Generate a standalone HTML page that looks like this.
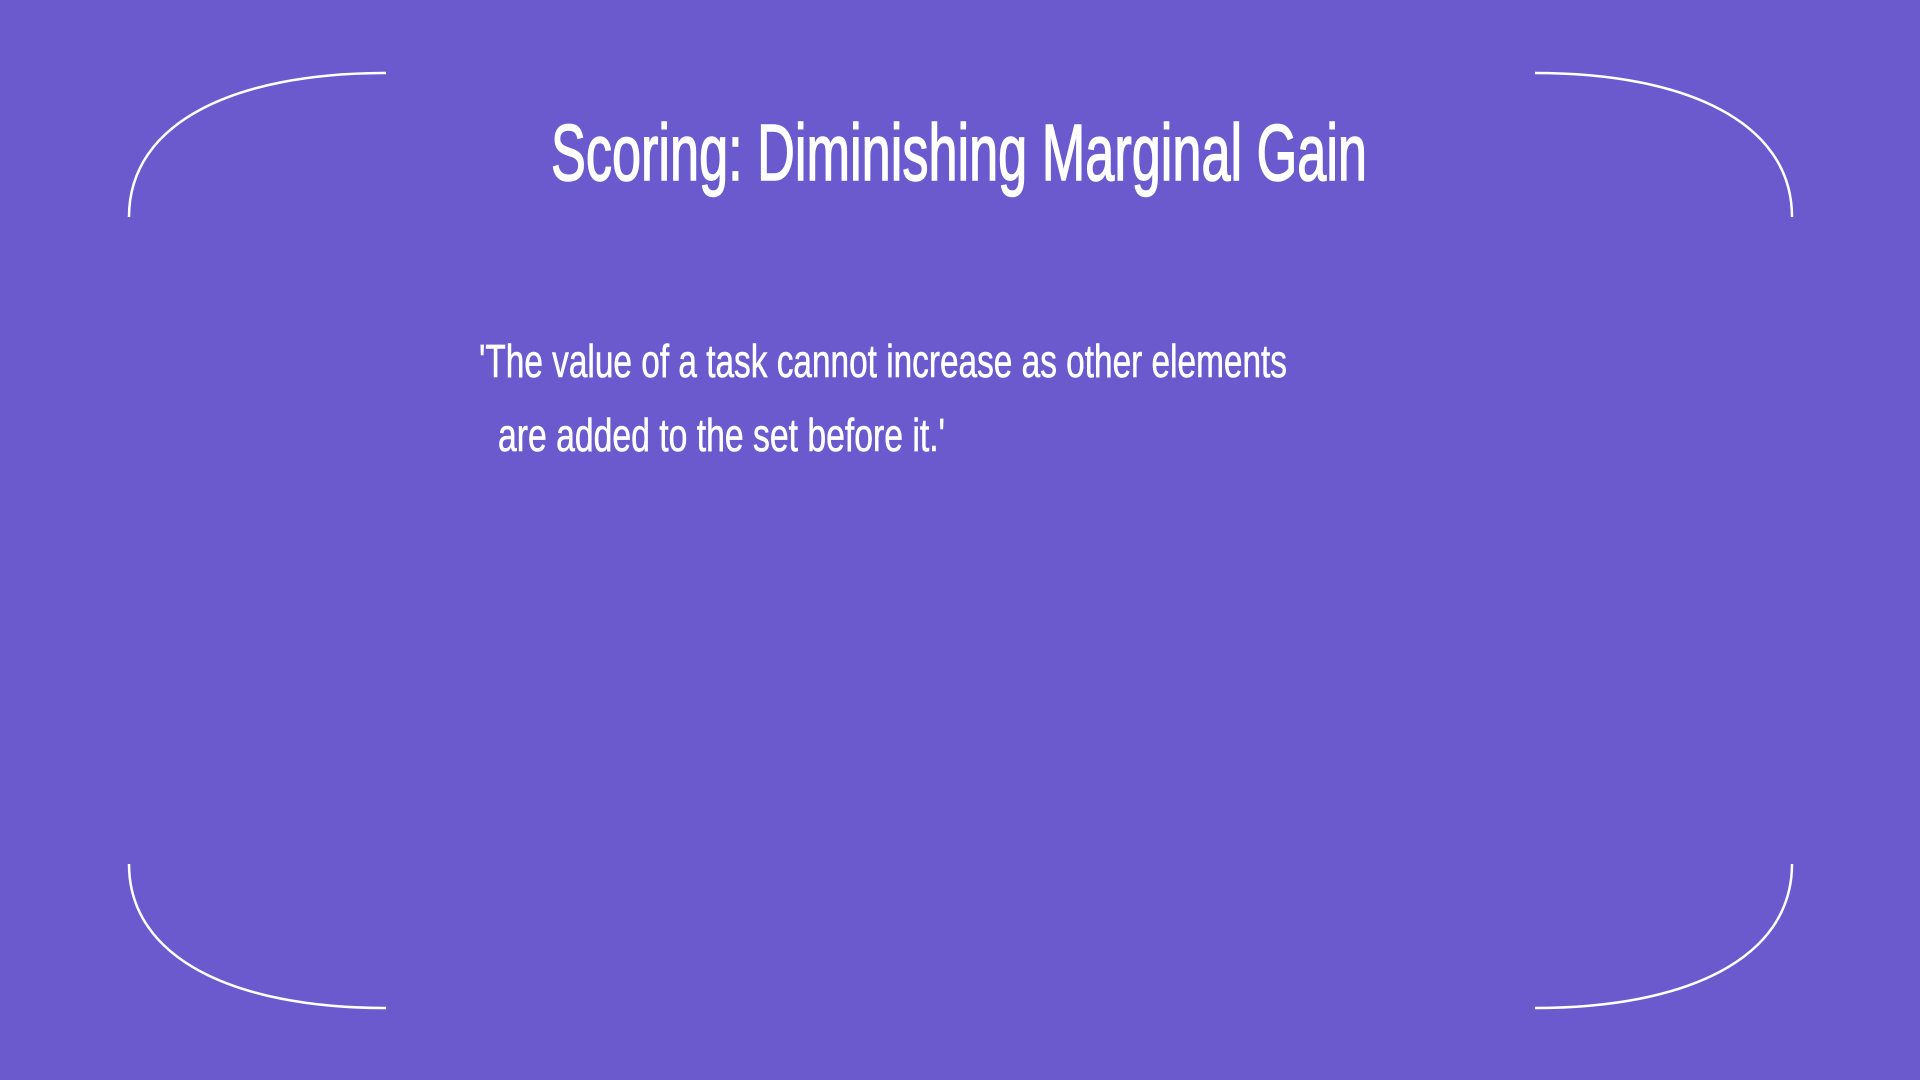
<!DOCTYPE html>
<html><head><meta charset="utf-8"><style>
html,body{margin:0;padding:0}
body{width:1920px;height:1080px;background:#6B5ACD;position:relative;overflow:hidden;font-family:"Liberation Sans",sans-serif;color:#fff}
.t{position:absolute;white-space:nowrap;transform-origin:0 0;line-height:1}
#title{font-size:80px;top:113px;left:551px;-webkit-text-stroke:1.5px #fff}
#l1{font-size:46px;top:338px;left:479px;-webkit-text-stroke:0.6px #fff}
#l2{font-size:46px;top:412px;left:498px;-webkit-text-stroke:0.6px #fff}
svg{position:absolute;left:0;top:0}
</style></head><body>
<svg width="1920" height="1080" fill="none" stroke="#fff" stroke-width="2.5">
<path d="M129,217 C129,122 235,73 386,73"/>
<path d="M1792,217 C1792,122 1686,73 1535,73"/>
<path d="M129,864 C129,959 235,1008 386,1008"/>
<path d="M1792,864 C1792,959 1686,1008 1535,1008"/>
</svg>
<div class="t" id="title" data-w="816">Scoring: Diminishing Marginal Gain</div>
<div class="t" id="l1" data-w="808">'The value of a task cannot increase as other elements</div>
<div class="t" id="l2" data-w="447">are added to the set before it.'</div>
<script>
document.querySelectorAll('.t').forEach(function(e){
var w=e.getBoundingClientRect().width;var s=parseFloat(e.dataset.w)/w;
e.style.transform='scaleX('+s+')';});
</script>
</body></html>
